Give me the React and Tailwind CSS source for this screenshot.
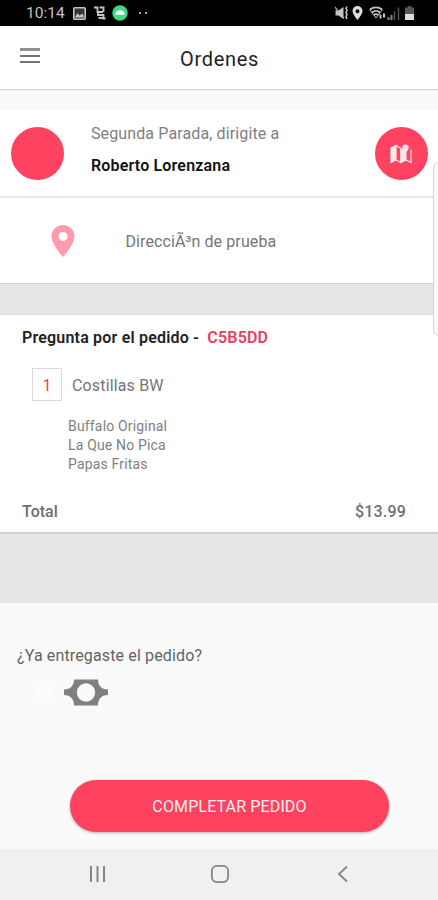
const order = {
  code: 'C5B5DD',
  customer: 'Roberto Lorenzana',
  address: 'DirecciÃ³n de prueba',
  total: '$13.99',
  items: [
    { qty: 1, name: 'Costillas BW', extras: ['Buffalo Original', 'La Que No Pica', 'Papas Fritas'] },
  ],
};

const StatusBar = () => (
  <div className="flex h-[26px] items-center justify-between bg-black pl-[26px] pr-[24px] text-[#c4c4c4]">
    <div className="flex items-center">
      <span className="w-[38px] whitespace-nowrap pt-[2px] text-[15.5px] leading-none">10:14</span>
      <svg className="ml-[9px]" width="13" height="13" viewBox="0 0 13 13">
        <rect x="0.8" y="0.8" width="11.4" height="11.4" rx="1" fill="#333" stroke="currentColor" strokeWidth="1.6" />
        <path d="M2 10.5L4.500 6l2 2.500 3-2 1.500 4z" fill="currentColor" />
      </svg>
      <svg className="ml-[8px]" width="12" height="14" viewBox="0 0 12 14" fill="none" stroke="currentColor" strokeWidth="1.8">
        <path d="M0 1.500h3.500v4.500h5.500M5.500 1.500h5M9.500 1.500v4.500M4 6v3h5.500v3h-5M8.500 12.500h3" />
      </svg>
      <svg className="ml-[6px]" width="16" height="16" viewBox="0 0 16 16">
        <circle cx="8" cy="8" r="7.700" fill="#3ddc84" />
        <path d="M3.200 9.800a4.800 4.500 0 0 1 9.600 0z" fill="#fff" />
      </svg>
      <div className="ml-[11px] flex gap-[4px]">
        <span className="size-[2px] bg-[#a8a8a8]" />
        <span className="size-[2px] bg-[#a8a8a8]" />
      </div>
    </div>
    <div className="flex items-center">
      <svg width="14" height="14" viewBox="0 0 14 14">
        <path d="M0.500 4.500h3L8.500 1v12L3.500 9.500h-3z" fill="currentColor" />
        <path d="M0 1l9 11.500" stroke="currentColor" strokeWidth="1.200" />
        <path d="M12 0.500l-1 2 1 2-1 2 1 2-1 2 1 2.500" stroke="currentColor" strokeWidth="1.600" fill="none" />
      </svg>
      <svg className="ml-[3px]" width="11" height="14" viewBox="0 0 11 14">
        <path fillRule="evenodd" d="M5.500 0A5 5 0 0 0 .5 5.100C.5 8.500 5.500 14 5.500 14s5-5.500 5-8.900A5 5 0 0 0 5.500 0zm0 3.200a2 2 0 1 1 0 4 2 2 0 0 1 0-4z" fill="#ddd" />
      </svg>
      <svg className="ml-[6px]" width="17" height="14" viewBox="0 0 17 14" fill="none" stroke="currentColor">
        <path d="M1 3.500a9.500 9.500 0 0 1 12 0M3 6.500a6 6 0 0 1 8 0M4.800 9a3.500 3.500 0 0 1 4.400 0" strokeWidth="1.700" />
        <path d="M0.500 3.500L7 12l6.500-8.500" strokeWidth="1" />
        <path d="M11.500 8.500v4M15 7.500v4" strokeWidth="2" />
      </svg>
      <svg className="ml-[1px]" width="13" height="13" viewBox="0 0 13 13" stroke="#858585">
        <path d="M1.500 10v3M4.500 8v5" strokeWidth="2" />
        <path d="M7.500 4.500V13M11.500 0.500V13" strokeWidth="1.500" stroke="#555" />
      </svg>
      <svg className="ml-[5px]" width="9" height="14" viewBox="0 0 9 14">
        <path d="M2.500 0h4v1.500H9V14H0V1.500h2.500z" fill="#555" />
        <path d="M0 8h9v6H0z" fill="#ddd" />
      </svg>
    </div>
  </div>
);

const Header = () => (
  <div className="relative z-10 flex h-[63px] items-center justify-center bg-white shadow-[0_1px_1px_rgba(0,0,0,0.16)]">
    <button className="absolute left-[20px] top-[22px] flex h-[15px] w-[20px] flex-col justify-between">
      <span className="h-[3px] w-full bg-[#919191]" />
      <span className="h-[2px] w-full bg-[#747474]" />
      <span className="h-[2px] w-full bg-[#747474]" />
    </button>
    <h1 className="pl-[1px] pt-[3px] text-[20px] tracking-[0.7px] text-[#222]">Ordenes</h1>
  </div>
);

const NavBar = () => (
  <div className="flex h-[51px] items-center justify-between bg-[#f0f0f0] pb-[2px] pl-[89px] pr-[89px]">
    <svg width="17" height="16" viewBox="0 0 17 16" stroke="#858585" strokeWidth="2">
      <path d="M2 0v16M8.500 0v16M15 0v16" />
    </svg>
    <svg className="-ml-[4px]" width="20" height="20" viewBox="0 0 20 20" fill="none" stroke="#858585" strokeWidth="1.800">
      <rect x="1.900" y="1.900" width="16.200" height="16.200" rx="5" />
    </svg>
    <svg width="12" height="18" viewBox="0 0 12 18" fill="none" stroke="#858585" strokeWidth="1.800">
      <path d="M10 1.500L2 9l8 7.500" />
    </svg>
  </div>
);

const App = () => {
  return (
    <div className="relative flex h-[900px] w-full flex-col overflow-hidden bg-[#fafafa] font-['Roboto',sans-serif] text-[16px] leading-[20px] text-[#757575]">
      <StatusBar />
      <Header />

      <section className="mt-[21px] bg-white">
        <div className="flex h-[88px] items-center border-b-2 border-[#e9e9e9] pl-[11px] pr-[10px]">
          <div className="size-[53px] rounded-full bg-[#ff4260]" />
          <div className="-mt-[6px] ml-[27px] flex-1">
            <p className="tracking-[0.12px] text-[#808080]">Segunda Parada, dirigite a</p>
            <p className="mt-[12px] font-semibold tracking-[0.17px] text-[#111]">{order.customer}</p>
          </div>
          <button className="flex size-[53px] items-center justify-center rounded-full bg-[#ff4260]">
            <svg className="mr-[1px] mt-[1px]" width="22" height="20" viewBox="0 0 22 20" fill="none" stroke="#ffe9ec" strokeWidth="1.200">
              <path d="M1 4L6 1.500V16l-5 2.500z" fill="#ffe9ec" />
              <path d="M6 1.500l5 3v14L6 16" />
              <path d="M11 5l5 4v7l-5 2.500z" fill="#ffe9ec" />
              <path d="M16 16l5 2.500V5.500" />
              <path d="M15.500 0.500a3.200 3.200 0 0 1 3.200 3.200c0 2-3.200 5.500-3.200 5.500s-3.200-3.500-3.200-5.500A3.200 3.200 0 0 1 15.500 0.500z" fill="#ffe9ec" stroke="none" />
            </svg>
          </button>
        </div>
        <div className="flex h-[85px] items-center pl-[51px]">
          <svg width="24" height="32" viewBox="0 0 24 32">
            <path fillRule="evenodd" d="M12 0C5.400 0 0.500 5 0.500 11.500 0.500 19.500 12 32 12 32s11.500-12.500 11.500-20.500C23.500 5 18.600 0 12 0zm0 7a4.500 4.500 0 1 1 0 9 4.500 4.500 0 0 1 0-9z" fill="#ff9bad" />
          </svg>
          <p className="ml-[50.500px] pt-[2px] tracking-[0.1px]">{order.address}</p>
        </div>
      </section>

      <div className="h-[32px] border-y border-t-[#cfcfcf] border-b-[#dedede] bg-[#e7e7e7]" />

      <section className="h-[217px] bg-white px-[22px] pt-[13px]">
        <h2 className="font-semibold tracking-[0.19px] text-[#222]">
          Pregunta por el pedido - <span className="ml-[4px] text-[#e83e60]">{order.code}</span>
        </h2>
        {order.items.map((item) => (
          <div key={item.name}>
            <div className="mt-[20px] flex items-center pl-[10px]">
              <span className="flex h-[33px] w-[30px] items-center justify-center border border-[#dadada] pt-[2px] text-[#ee3b60]">{item.qty}</span>
              <span className="ml-[10px] pt-[2px] tracking-[0.15px]">{item.name}</span>
            </div>
            <ul className="mt-[16px] pl-[46px] text-[14px] leading-[19px] tracking-[0.17px] text-[#808080]">
              {item.extras.map((extra) => (
                <li key={extra}>{extra}</li>
              ))}
            </ul>
          </div>
        ))}
        <div className="mt-[28px] flex justify-between pr-[10px] font-medium text-[#6f6f6f]">
          <span>Total</span>
          <span className="tracking-[0.2px]">{order.total}</span>
        </div>
      </section>

      <div className="h-[71px] border-t-2 border-[#d2d2d2] bg-[#e7e7e7]" />

      <section className="flex flex-1 flex-col px-[17px] pt-[43px]">
        <p className="tracking-[0.14px] text-[#636363]">¿Ya entregaste el pedido?</p>
        <div className="mt-[13px] flex pl-[17px]">
          <span className="mt-[3px] size-[20px] rounded-full bg-[#fcfcfc]" />
          <svg className="ml-[10px]" width="44" height="27" viewBox="0 0 44 27">
            <path fillRule="evenodd" d="M10 0.500H34C34 6 37 10.500 44 10.500V16C37 16 34 20.500 34 26.500H10C10 20.500 7 16 0 16V10.500C7 10.500 10 6 10 0.500zM22 4.300a9.200 9.200 0 1 0 0 18.400 9.200 9.200 0 0 0 0-18.400z" fill="#808080" />
          </svg>
        </div>
        <button className="mb-[17px] ml-[53px] mt-auto flex h-[52px] w-[319px] items-center justify-center rounded-full bg-[#ff4260] pt-[1px] tracking-[0.14px] text-[#fff0f2] shadow-[0_1px_3px_rgba(0,0,0,0.3)]">
          COMPLETAR PEDIDO
        </button>
      </section>

      <NavBar />

      {/* edge panel handle */}
      <div className="absolute left-[433px] top-[162px] h-[174px] w-[12px] rounded-[7px] border border-[#d6d6d6] bg-[#fafafa]" />
    </div>
  );
};

export default App;
